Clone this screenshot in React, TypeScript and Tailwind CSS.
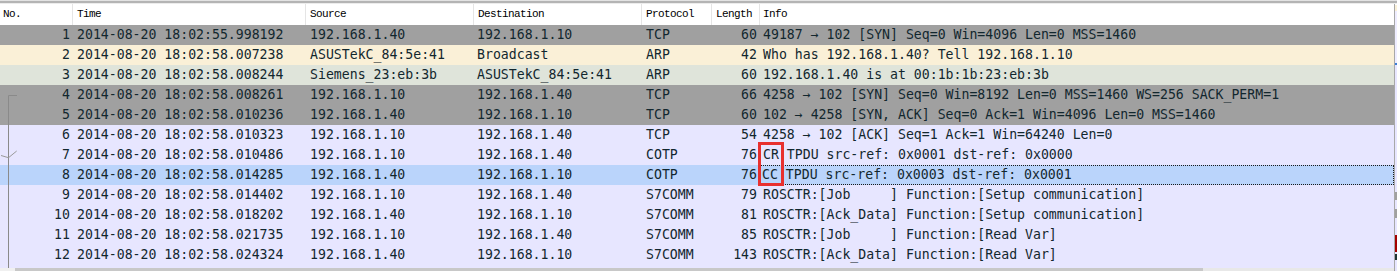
import React from "react";

type Row = {
  no: number;
  time: string;
  src: string;
  dst: string;
  proto: string;
  len: number;
  info: string;
  bg: string;
  selected?: boolean;
};

const rows: Row[] = [
  { no: 1, time: "2014-08-20 18:02:55.998192", src: "192.168.1.40", dst: "192.168.1.10", proto: "TCP", len: 60, info: "49187 → 102 [SYN] Seq=0 Win=4096 Len=0 MSS=1460", bg: "bg-[#a0a0a0]" },
  { no: 2, time: "2014-08-20 18:02:58.007238", src: "ASUSTekC_84:5e:41", dst: "Broadcast", proto: "ARP", len: 42, info: "Who has 192.168.1.40? Tell 192.168.1.10", bg: "bg-[#faf0d7]" },
  { no: 3, time: "2014-08-20 18:02:58.008244", src: "Siemens_23:eb:3b", dst: "ASUSTekC_84:5e:41", proto: "ARP", len: 60, info: "192.168.1.40 is at 00:1b:1b:23:eb:3b", bg: "bg-[#dfe4da]" },
  { no: 4, time: "2014-08-20 18:02:58.008261", src: "192.168.1.10", dst: "192.168.1.40", proto: "TCP", len: 66, info: "4258 → 102 [SYN] Seq=0 Win=8192 Len=0 MSS=1460 WS=256 SACK_PERM=1", bg: "bg-[#a0a0a0]" },
  { no: 5, time: "2014-08-20 18:02:58.010236", src: "192.168.1.40", dst: "192.168.1.10", proto: "TCP", len: 60, info: "102 → 4258 [SYN, ACK] Seq=0 Ack=1 Win=4096 Len=0 MSS=1460", bg: "bg-[#a0a0a0]" },
  { no: 6, time: "2014-08-20 18:02:58.010323", src: "192.168.1.10", dst: "192.168.1.40", proto: "TCP", len: 54, info: "4258 → 102 [ACK] Seq=1 Ack=1 Win=64240 Len=0", bg: "bg-[#e7e6ff]" },
  { no: 7, time: "2014-08-20 18:02:58.010486", src: "192.168.1.10", dst: "192.168.1.40", proto: "COTP", len: 76, info: "CR TPDU src-ref: 0x0001 dst-ref: 0x0000", bg: "bg-[#e7e6ff]" },
  { no: 8, time: "2014-08-20 18:02:58.014285", src: "192.168.1.40", dst: "192.168.1.10", proto: "COTP", len: 76, info: "CC TPDU src-ref: 0x0003 dst-ref: 0x0001", bg: "bg-[#bad4fb]", selected: true },
  { no: 9, time: "2014-08-20 18:02:58.014402", src: "192.168.1.10", dst: "192.168.1.40", proto: "S7COMM", len: 79, info: "ROSCTR:[Job     ] Function:[Setup communication]", bg: "bg-[#e7e6ff]" },
  { no: 10, time: "2014-08-20 18:02:58.018202", src: "192.168.1.40", dst: "192.168.1.10", proto: "S7COMM", len: 81, info: "ROSCTR:[Ack_Data] Function:[Setup communication]", bg: "bg-[#e7e6ff]" },
  { no: 11, time: "2014-08-20 18:02:58.021735", src: "192.168.1.10", dst: "192.168.1.40", proto: "S7COMM", len: 85, info: "ROSCTR:[Job     ] Function:[Read Var]", bg: "bg-[#e7e6ff]" },
  { no: 12, time: "2014-08-20 18:02:58.024324", src: "192.168.1.40", dst: "192.168.1.10", proto: "S7COMM", len: 143, info: "ROSCTR:[Ack_Data] Function:[Read Var]", bg: "bg-[#e7e6ff]" },
];

const grid = "grid grid-cols-[72px_233px_168px_168px_70px_48px_1fr]";
const mono = "font-['DejaVu_Sans_Mono',monospace] text-[13.2px] leading-[20px] text-[#12272e]";
const head = "font-['Liberation_Mono',monospace] text-[11px] tracking-[-0.6px] leading-[21px] text-black";

export default function App() {
  return (
    <div className="w-[1397px] h-[271px] overflow-hidden bg-white">
      {/* top border band */}
      <div className="h-[1px] bg-[#e3e3e3]" />
      <div className="h-[2px] bg-[#b4b4b4]" />
      <div className="h-[1px] bg-[#ececec]" />
      <div className="flex">
        {/* table */}
        <div className="w-[1394px] relative">
          {/* header */}
          <div className={`${grid} h-[21px] bg-white ${head}`}>
            <div className="pl-[3px]">No.</div>
            <div className="pl-[4px] border-l border-[#e5e5e5]">Time</div>
            <div className="pl-[4px] border-l border-[#e5e5e5]">Source</div>
            <div className="pl-[4px] border-l border-[#e5e5e5]">Destination</div>
            <div className="pl-[4px] border-l border-[#e5e5e5]">Protocol</div>
            <div className="pl-[4px] border-l border-[#e5e5e5]">Length</div>
            <div className="pl-[3px] border-l border-[#e5e5e5]">Info</div>
          </div>
          {/* rows */}
          <div className="relative">
            {rows.map((r) => (
              <div key={r.no} className={`${grid} h-[20px] ${r.bg} ${mono} whitespace-pre`}>
                <div className="text-right pr-[2px]">{r.no}</div>
                <div className="pl-[5px]">{r.time}</div>
                <div className="pl-[5px]">{r.src}</div>
                <div className="pl-[4px]">{r.dst}</div>
                <div className="pl-[5px]">{r.proto}</div>
                <div className="text-right pr-[2px]">{r.len}</div>
                {r.selected ? (
                  <div className="pl-[2px] border border-dotted border-[#1a1a1a] leading-[18px] overflow-hidden">{r.info}</div>
                ) : (
                  <div className="pl-[4px] overflow-hidden">{r.info}</div>
                )}
              </div>
            ))}
            <div className="h-[3px] bg-[#e7e6ff]" />
            {/* conversation tree */}
            <svg className="absolute left-0 top-0" width="20" height="243" viewBox="0 0 20 243">
              <path d="M8.5 70.5 H17 M8.5 70.5 V243" stroke="#8a8a8a" strokeWidth="1" fill="none" />
              <path d="M1 130.5 L8.5 132.7 L16.7 126" stroke="#9a9a9a" strokeWidth="1" fill="none" />
            </svg>
            {/* red highlight box */}
            <div className="absolute left-[758px] top-[117px] w-[26px] h-[44px] border-[3px] border-[#e8302f]" />
          </div>
          {/* horizontal scrollbar */}
          <div className="flex h-[3px]">
            <div className="w-[15px] bg-[#f0f0f0]" />
            <div className="w-[1188px] bg-[#c8c8c8]" />
            <div className="flex-1 bg-[#e8e8e8]" />
          </div>
        </div>
        {/* vertical divider */}
        <div className="w-[1px] h-[267px] bg-[#a8a8a8]" />
        {/* minimap */}
        <div className="w-[2px] h-[267px] flex flex-col">
          <div className="h-[1px] bg-white" />
          <div className="h-[6px] bg-[#faf0d7]" />
          <div className="h-[52px] bg-[#eeedff]" />
          <div className="h-[2px] bg-[#3c7fd6]" />
          <div className="h-[127px] bg-[#e7e6ff]" />
          <div className="h-[8px] bg-[#a0a0a0]" />
          <div className="h-[9px] bg-[#e7e6ff]" />
          <div className="h-[9px] bg-[#a0a0a0]" />
          <div className="h-[17px] bg-[#e7e6ff]" />
          <div className="h-[17px] bg-[#a40000]" />
          <div className="h-[2px] bg-[#e7e6ff]" />
          <div className="h-[6px] bg-[#1e3434]" />
          <div className="flex-1 bg-[#e7e6ff]" />
        </div>
      </div>
    </div>
  );
}
